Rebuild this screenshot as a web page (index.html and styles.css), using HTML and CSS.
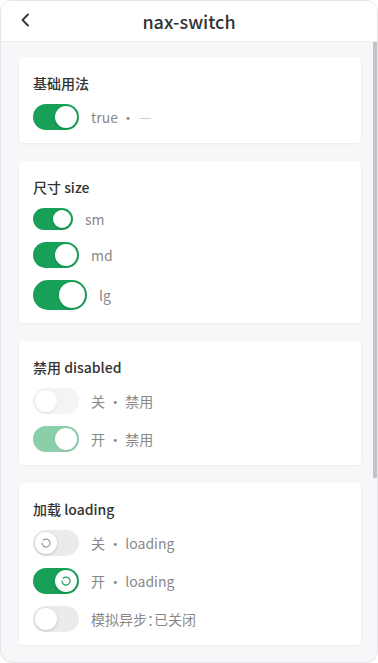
FILE: index.html
```html
<!DOCTYPE html>
<html lang="zh-CN">
<head>
<meta charset="utf-8">
<title>nax-switch</title>
<link rel="stylesheet" href="styles.css">
</head>
<body>
<div class="frame">
  <header class="nav">
    <span class="back">
      <svg width="10" height="14" viewBox="0 0 10 14"><path d="M8 1.5 L2.5 7 L8 12.5" fill="none" stroke="#333" stroke-width="1.8" stroke-linecap="round" stroke-linejoin="round"/></svg>
    </span>
    <h1 class="nav-title">nax-switch</h1>
  </header>
  <main class="content">
    <section class="card">
      <h2 class="card-title">基础用法</h2>
      <div class="row"><span class="sw on md"><span class="knob"></span></span><span class="label">true · <span class="dim">—</span></span></div>
    </section>
    <section class="card">
      <h2 class="card-title">尺寸 size</h2>
      <div class="row"><span class="sw on sm"><span class="knob"></span></span><span class="label">sm</span></div>
      <div class="row"><span class="sw on md"><span class="knob"></span></span><span class="label">md</span></div>
      <div class="row"><span class="sw on lg"><span class="knob"></span></span><span class="label">lg</span></div>
    </section>
    <section class="card">
      <h2 class="card-title">禁用 disabled</h2>
      <div class="row"><span class="sw md disabled"><span class="knob"></span></span><span class="label">关 · 禁用</span></div>
      <div class="row"><span class="sw on md disabled"><span class="knob"></span></span><span class="label">开 · 禁用</span></div>
    </section>
    <section class="card">
      <h2 class="card-title">加载 loading</h2>
      <div class="row"><span class="sw md"><span class="knob"><svg class="spin" width="10" height="10" viewBox="0 0 10 10"><path d="M2.2 2.2 A4 4 0 1 1 1 5" fill="none" stroke="#999" stroke-width="1.2" stroke-linecap="round"/></svg></span></span><span class="label">关 · loading</span></div>
      <div class="row"><span class="sw on md"><span class="knob"><svg class="spin" width="10" height="10" viewBox="0 0 10 10"><path d="M2.2 2.2 A4 4 0 1 1 1 5" fill="none" stroke="#18a058" stroke-width="1.2" stroke-linecap="round"/></svg></span></span><span class="label">开 · loading</span></div>
      <div class="row"><span class="sw md"><span class="knob"></span></span><span class="label">模拟异步<span class="half">：</span>已关闭</span></div>
    </section>
  </main>
  <div class="scroll-thumb"></div>
</div>
</body>
</html>
```
FILE: styles.css
```css
* { box-sizing: border-box; }
html, body { margin: 0; padding: 0; }
body {
  font-family: "Noto Sans CJK SC", "Noto Sans", sans-serif;
  color: #333;
  background: #fff;
}
.frame {
  position: relative;
  width: 378px;
  height: 663px;
  border: 1px solid #e6e6ea;
  border-radius: 12px;
  overflow: hidden;
  display: flex;
  flex-direction: column;
  background: #f7f7f9;
}
.nav {
  height: 41px;
  flex: none;
  background: #fff;
  border-bottom: 1px solid #ececef;
  display: flex;
  align-items: center;
  justify-content: center;
  position: relative;
}
.back {
  position: absolute;
  left: 19px;
  top: 12px;
  width: 10px;
  height: 14px;
  display: flex;
}
.nav-title {
  margin: 0;
  font-size: 18px;
  font-weight: 500;
  color: #333;
  line-height: 24px;
}
.content {
  flex: 1;
  padding: 15px 16px 0 18px;
  display: flex;
  flex-direction: column;
  gap: 18px;
  overflow: hidden;
}
.card {
  flex: none;
  background: #fff;
  border-radius: 4px;
  box-shadow: 0 1px 3px rgba(0,0,0,0.05);
  padding: 16px 14px 13px;
  display: flex;
  flex-direction: column;
  gap: 12px;
}
.card-title {
  margin: 0 0 -1px;
  font-size: 14px;
  font-weight: 500;
  line-height: 20px;
  color: #333;
}
.row {
  display: flex;
  align-items: center;
  gap: 12px;
}
.label {
  font-size: 14px;
  color: #888;
  line-height: 20px;
}
.half { font-feature-settings: "halt"; }
.dim { color: #b0b0b0; }
.sw {
  flex: none;
  display: flex;
  align-items: center;
  padding: 2px;
  border-radius: 999px;
  background: #ebebeb;
}
.sw.md { width: 46px; height: 26px; }
.sw.sm { width: 40px; height: 22px; }
.sw.lg { width: 54px; height: 30px; }
.sw.on { background: #18a058; justify-content: flex-end; }
.knob {
  border-radius: 50%;
  background: #fff;
  box-shadow: 0 1px 3px rgba(0,0,0,0.18);
  display: flex;
  align-items: center;
  justify-content: center;
}
.sw.md .knob { width: 22px; height: 22px; }
.sw.sm .knob { width: 18px; height: 18px; }
.sw.lg .knob { width: 26px; height: 26px; }
.sw.disabled { opacity: 0.5; }
.sw.disabled:not(.on) { background: #ebebeb; }
.scroll-thumb {
  position: absolute;
  right: 0;
  top: 41px;
  width: 4px;
  height: 436px;
  background: #c4c4c4;
}
```
